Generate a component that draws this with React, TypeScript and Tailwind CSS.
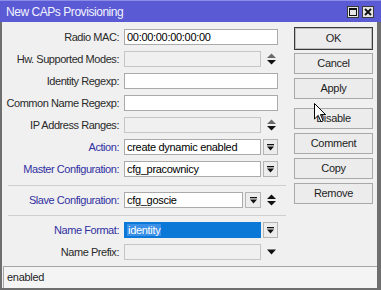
import React from "react";

const font = { fontFamily: '"Liberation Sans", Arial, sans-serif' };

function DropIcon() {
  return (
    <svg width="7" height="7" viewBox="0 0 7 7">
      <rect x="0" y="0" width="7" height="1.3" fill="#111" />
      <polygon points="0,2.5 7,2.5 3.5,6.5" fill="#111" />
    </svg>
  );
}

function DropBtn({ w = 15 }: { w?: number }) {
  return (
    <div
      className="h-[16px] flex items-center justify-center border border-[#b4b4b4] bg-[#ececec] shrink-0"
      style={{ width: w }}
    >
      <DropIcon />
    </div>
  );
}

function Spinner({ upGray = false }: { upGray?: boolean }) {
  return (
    <div className="w-[9px] h-[16px] flex items-center justify-center ml-[6px] shrink-0">
      <svg width="9" height="12" viewBox="0 0 9 12">
        <polygon points="0,5 4.5,0.5 9,5" fill={upGray ? "#6a6a6a" : "#111"} />
        <polygon points="0,7 9,7 4.5,11.5" fill="#111" />
      </svg>
    </div>
  );
}

function Label({ text, blue = false }: { text: string; blue?: boolean }) {
  return (
    <div
      className={`w-[117px] shrink-0 text-right text-[11px] tracking-[-0.45px] leading-[16px] whitespace-nowrap ${
        blue ? "text-[#3030a2]" : "text-[#2a2a2a]"
      }`}
    >
      {text}
    </div>
  );
}

function Input({
  w,
  value = "",
  disabled = false,
  selected = false,
}: {
  w: number;
  value?: string;
  disabled?: boolean;
  selected?: boolean;
}) {
  const cls = selected
    ? "bg-[#0a78d6] border-[#0a78d6] text-white"
    : disabled
    ? "bg-[#f0f0f0] border-[#c6c6c6] text-black"
    : "bg-white border-[#aaaaaa] text-black";
  return (
    <div
      className={`h-[16px] border ${cls} shrink-0 text-[11px] tracking-[-0.3px] leading-[14px] pl-[2px] overflow-hidden whitespace-nowrap`}
      style={{ width: w }}
    >
      {selected ? <span className="bg-[#3a90e6] px-[1px]">{value}</span> : value}
    </div>
  );
}

function Row({ children }: { children: React.ReactNode }) {
  return <div className="flex items-center h-[16px]">{children}</div>;
}

function Btn({ text, def = false, className = "" }: { text: string; def?: boolean; className?: string }) {
  return (
    <div
      className={`w-[79px] flex items-center justify-center text-[11px] tracking-[-0.3px] text-[#1e1e1e] bg-[#ececec] border ${
        def ? "h-[23px] border-[#3a3a3a] shadow-[inset_0_0_0_1px_#bdbdbd]" : "h-[21px] border-[#a9a9a9]"
      } ${className}`}
    >
      {text}
    </div>
  );
}

export default function App() {
  return (
    <div className="relative w-[381px] h-[290px] flex flex-col bg-[#f0f0f0] overflow-hidden" style={font}>
      {/* Title bar */}
      <div className="h-[22px] shrink-0 bg-[#5a5ad4] border-t border-[#8c8ce6] flex items-center pl-[6px] pr-[6px]">
        <div className="text-[12px] tracking-[-0.45px] text-[#f2f2ff] flex-1">New CAPs Provisioning</div>
        <div className="flex gap-[3px] mr-[1px]">
          <div className="w-[12px] h-[12px] bg-[#e6e6e6] border border-[#3a3a3a] flex items-center justify-center">
            <svg width="8" height="8" viewBox="0 0 8 8">
              <rect x="0.5" y="0.5" width="7" height="7" fill="none" stroke="#111" strokeWidth="1" />
              <rect x="0" y="0" width="8" height="2" fill="#111" />
            </svg>
          </div>
          <div className="w-[12px] h-[12px] bg-[#e6e6e6] border border-[#3a3a3a] flex items-center justify-center">
            <svg width="8" height="8" viewBox="0 0 8 8">
              <path d="M1 1 L7 7 M7 1 L1 7" stroke="#111" strokeWidth="1.8" />
            </svg>
          </div>
        </div>
      </div>

      {/* Framed area */}
      <div className="flex-1 flex flex-col border-l-2 border-r-[4px] border-b-2 border-[#6e6e6e]">
        <div className="flex-1 flex">
          {/* Form */}
          <div className="w-[276px] flex flex-col gap-[6px] pt-[7px]">
            <Row>
              <Label text="Radio MAC:" />
              <div className="w-[5px]" />
              <Input w={154} value="00:00:00:00:00:00" />
            </Row>
            <Row>
              <Label text="Hw. Supported Modes:" />
              <div className="w-[5px]" />
              <Input w={137} disabled />
              <Spinner upGray />
            </Row>
            <Row>
              <Label text="Identity Regexp:" />
              <div className="w-[5px]" />
              <Input w={154} />
            </Row>
            <Row>
              <Label text="Common Name Regexp:" />
              <div className="w-[5px]" />
              <Input w={154} />
            </Row>
            <Row>
              <Label text="IP Address Ranges:" />
              <div className="w-[5px]" />
              <Input w={137} disabled />
              <Spinner upGray />
            </Row>
            <Row>
              <Label text="Action:" blue />
              <div className="w-[5px]" />
              <Input w={137} value="create dynamic enabled" />
              <div className="w-[2px]" />
              <DropBtn />
            </Row>
            <Row>
              <Label text="Master Configuration:" blue />
              <div className="w-[5px]" />
              <Input w={137} value="cfg_pracownicy" />
              <div className="w-[2px]" />
              <DropBtn />
            </Row>
            <div className="h-[3px] ml-[6px] mr-[-8px] border-b border-[#cfcfcf]" />
            <Row>
              <Label text="Slave Configuration:" blue />
              <div className="w-[5px]" />
              <Input w={119} value="cfg_goscie" />
              <div className="w-[2px]" />
              <DropBtn w={16} />
              <Spinner />
            </Row>
            <div className="h-[2px] ml-[6px] mr-[-8px] border-b border-[#cfcfcf]" />
            <Row>
              <Label text="Name Format:" blue />
              <div className="w-[5px]" />
              <Input w={137} value="identity" selected />
              <div className="w-[2px]" />
              <DropBtn />
            </Row>
            <Row>
              <Label text="Name Prefix:" />
              <div className="w-[5px]" />
              <Input w={137} disabled />
              <div className="w-[9px] h-[16px] flex items-center justify-center ml-[6px]">
                <svg width="9" height="6" viewBox="0 0 9 6">
                  <polygon points="0,0.5 9,0.5 4.5,5.5" fill="#111" />
                </svg>
              </div>
            </Row>
          </div>

          {/* Buttons */}
          <div className="ml-[16px] flex flex-col pt-[5px]">
            <Btn text="OK" def />
            <Btn text="Cancel" className="mt-[3px]" />
            <Btn text="Apply" className="mt-[4px]" />
            <Btn text="Disable" className="mt-[9px]" />
            <Btn text="Comment" className="mt-[4px]" />
            <Btn text="Copy" className="mt-[4px]" />
            <Btn text="Remove" className="mt-[4px]" />
          </div>
        </div>

        {/* Status bar */}
        <div className="h-[22px] shrink-0 ml-[1px] border-t border-l border-[#a6a6a6] bg-[#f4f4f4] flex items-center pl-[3px] text-[11px] tracking-[-0.3px] text-[#1e1e1e]">
          enabled
        </div>
      </div>

      {/* Mouse cursor overlay */}
      <svg className="absolute left-[314px] top-[103px]" width="13" height="20" viewBox="0 0 13 20">
        <path
          d="M0.5 0.5 L0.5 16 L4.2 12.4 L7 18.8 L9.2 17.8 L6.5 11.6 L11.5 11.6 Z"
          fill="#fff"
          stroke="#000"
          strokeWidth="1"
          strokeLinejoin="miter"
        />
      </svg>
    </div>
  );
}
